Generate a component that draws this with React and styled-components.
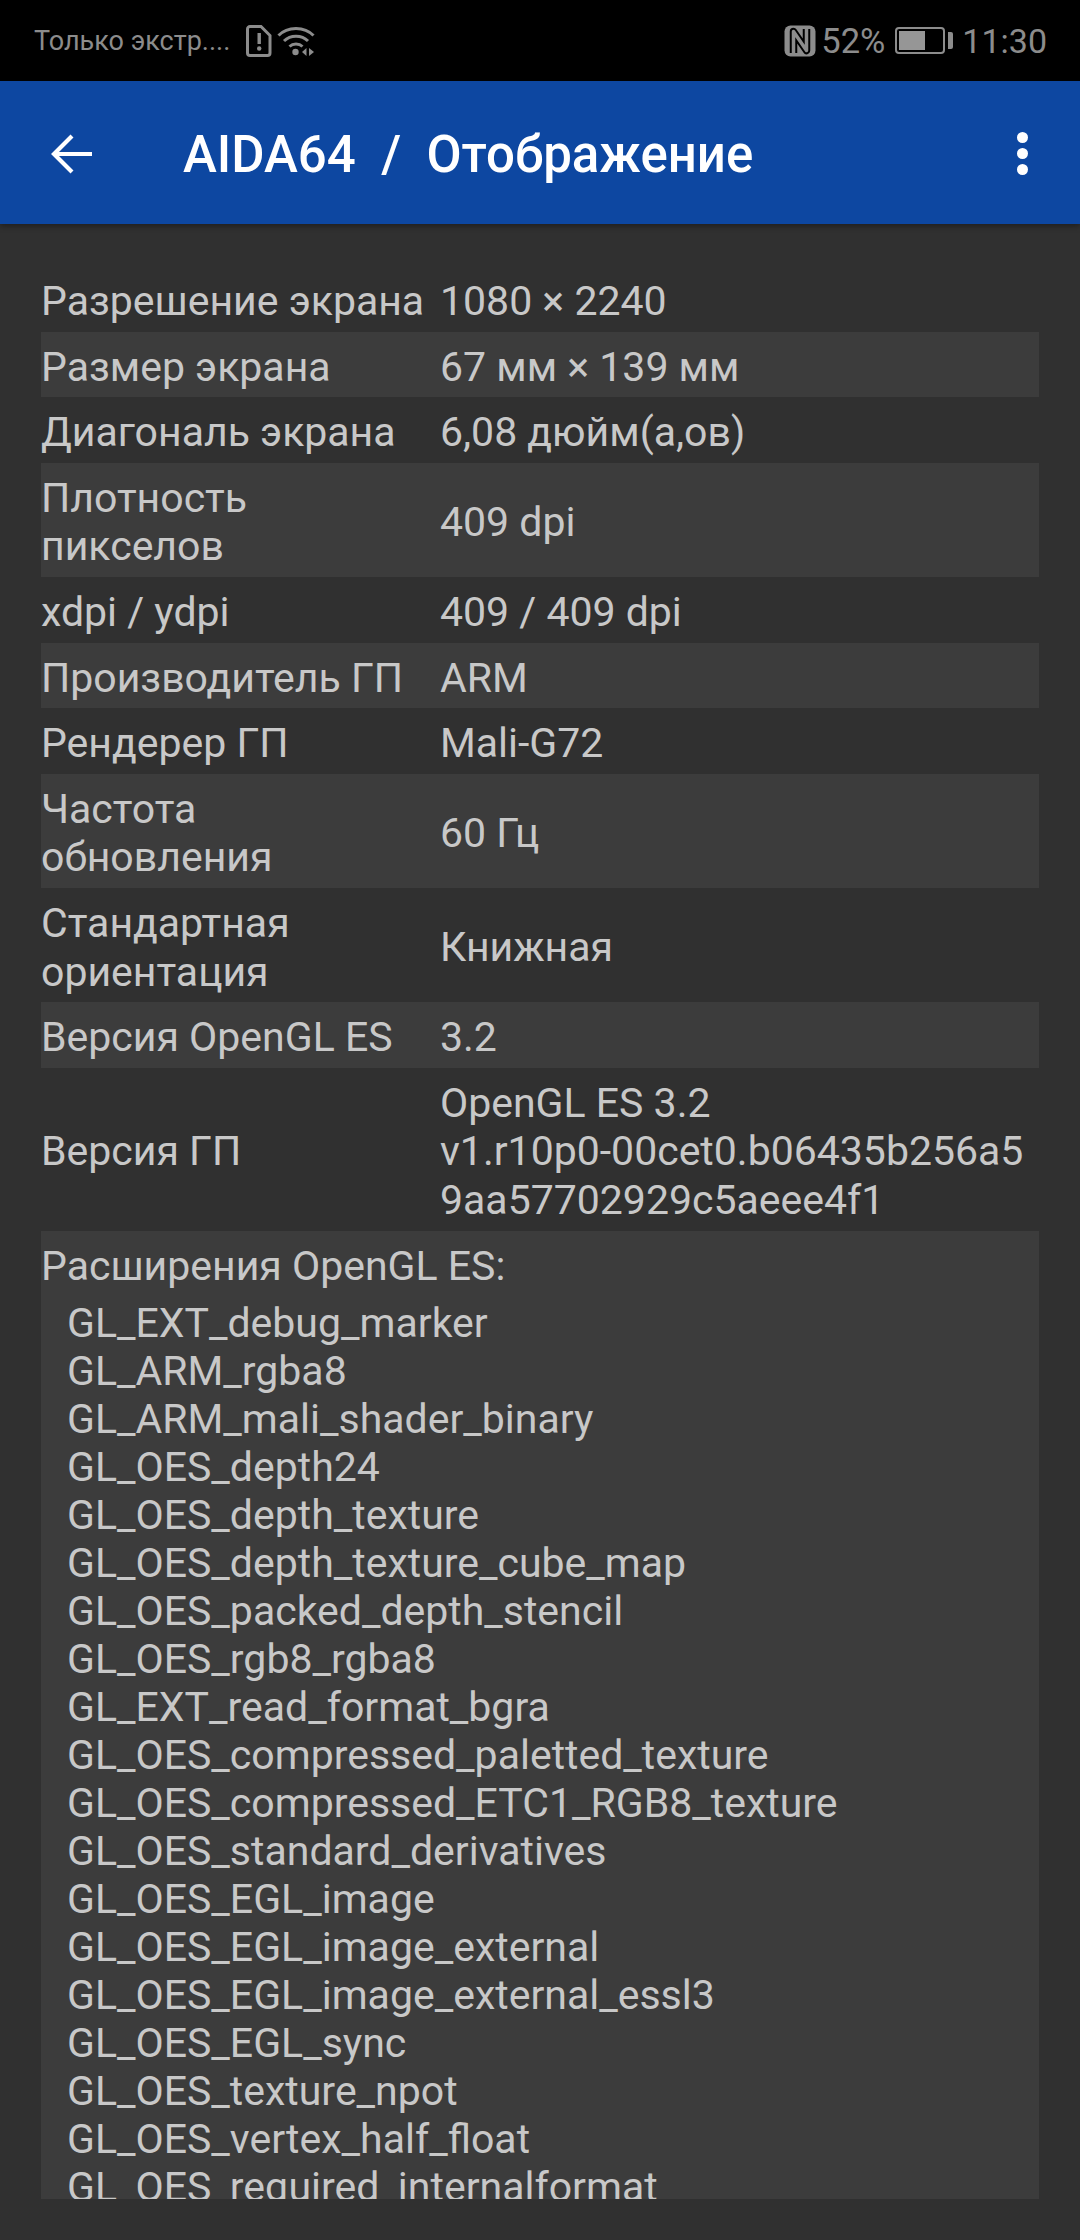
import React from 'react'
import styled, { createGlobalStyle } from 'styled-components'

const rows = [
  ['Разрешение экрана', '1080 × 2240'],
  ['Размер экрана', '67 мм × 139 мм'],
  ['Диагональ экрана', '6,08 дюйм(а,ов)'],
  ['Плотность\nпикселов', '409 dpi'],
  ['xdpi / ydpi', '409 / 409 dpi'],
  ['Производитель ГП', 'ARM'],
  ['Рендерер ГП', 'Mali-G72'],
  ['Частота\nобновления', '60 Гц'],
  ['Стандартная\nориентация', 'Книжная'],
  ['Версия OpenGL ES', '3.2'],
  ['Версия ГП', 'OpenGL ES 3.2\nv1.r10p0-00cet0.b06435b256a5\n9aa57702929c5aeee4f1'],
]

const extensions = [
  'GL_EXT_debug_marker',
  'GL_ARM_rgba8',
  'GL_ARM_mali_shader_binary',
  'GL_OES_depth24',
  'GL_OES_depth_texture',
  'GL_OES_depth_texture_cube_map',
  'GL_OES_packed_depth_stencil',
  'GL_OES_rgb8_rgba8',
  'GL_EXT_read_format_bgra',
  'GL_OES_compressed_paletted_texture',
  'GL_OES_compressed_ETC1_RGB8_texture',
  'GL_OES_standard_derivatives',
  'GL_OES_EGL_image',
  'GL_OES_EGL_image_external',
  'GL_OES_EGL_image_external_essl3',
  'GL_OES_EGL_sync',
  'GL_OES_texture_npot',
  'GL_OES_vertex_half_float',
  'GL_OES_required_internalformat',
]

const App = () => {
  return (
    <>
      <GlobalStyle />
      <Screen>
        <StatusBar>
          <StatusGroup>
            <Carrier>Только экстр....</Carrier>
            <svg width="26" height="32" viewBox="0 0 26 32">
              <path d="M4 1.500h11l9 9V28a2.500 2.500 0 0 1-2.500 2.500H4A2.500 2.500 0 0 1 1.500 28V4A2.500 2.500 0 0 1 4 1.500z" fill="none" stroke="#8c8c8c" strokeWidth="3" />
              <rect x="11.500" y="8" width="3.400" height="11" fill="#8c8c8c" />
              <circle cx="13.200" cy="23.500" r="2.200" fill="#8c8c8c" />
            </svg>
            <WifiIcon width="38" height="32" viewBox="0 0 38 32">
              <g fill="none" stroke="#8c8c8c" strokeWidth="3">
                <path d="M1.500 10.500C10.500 1 27.500 1 36.500 10.500" />
                <path d="M7 16c6.500-6.500 17.500-6.500 24 0" />
                <path d="M12.500 21.500c3.500-3.200 9.500-3.200 13 0" />
              </g>
              <circle cx="18.500" cy="27" r="3.200" fill="#8c8c8c" />
              <path d="M29.500 23v8l-4.500-4zM32 23v8l5-4z" fill="#8c8c8c" />
            </WifiIcon>
          </StatusGroup>
          <StatusGroup>
            <svg width="32" height="32" viewBox="0 0 32 32">
              <rect x="0.500" y="0.500" width="31" height="31" rx="6" fill="#8c8c8c" />
              <path d="M9.500 28V6.500L22.500 25.500V4" fill="none" stroke="#000" strokeWidth="7.500" strokeLinejoin="round" />
              <path d="M9.500 28V6.500L22.500 25.500V4" fill="none" stroke="#8c8c8c" strokeWidth="3.500" strokeLinejoin="round" />
            </svg>
            <BatteryPercent>52%</BatteryPercent>
            <BatteryIcon>
              <BatteryLevel />
            </BatteryIcon>
            <BatteryNub />
            <Clock>11:30</Clock>
          </StatusGroup>
        </StatusBar>

        <Toolbar>
          <IconSlot>
            <svg width="44" height="44" viewBox="0 0 44 44">
              <path d="M42 22H5M22 4L4 22l18 18" fill="none" stroke="#fff" strokeWidth="4.200" />
            </svg>
          </IconSlot>
          <Title>AIDA64&nbsp; /&nbsp; Отображение</Title>
          <MenuDots>
            <span />
            <span />
            <span />
          </MenuDots>
        </Toolbar>

        <Content>
          {rows.map(([label, value], i) => (
            <Row key={label} $striped={i % 2 === 1}>
              <Label>{label}</Label>
              <Value>{value}</Value>
            </Row>
          ))}
          <ExtBlock>
            <ExtHead>Расширения OpenGL ES:</ExtHead>
            {extensions.map((name) => (
              <ExtItem key={name}>{name}</ExtItem>
            ))}
          </ExtBlock>
        </Content>
      </Screen>
    </>
  )
}

export default App

const GlobalStyle = createGlobalStyle`
  html, body {
    margin: 0;
    padding: 0;
    background: #303030;
  }
`

const Screen = styled.div`
  width: 1080px;
  height: 2240px;
  display: flex;
  flex-direction: column;
  overflow: hidden;
  background: #303030;
  font-family: Roboto, "Noto Sans", sans-serif;
`

const StatusBar = styled.div`
  height: 81px;
  flex: none;
  background: #000;
  color: #8c8c8c;
  display: flex;
  align-items: center;
  justify-content: space-between;
  padding: 0 33px 0 34px;
`

const StatusGroup = styled.div`
  display: flex;
  align-items: center;
`

const Carrier = styled.span`
  font-size: 27px;
  margin-right: 16px;
`

const WifiIcon = styled.svg`
  margin-left: 5px;
`

const BatteryPercent = styled.span`
  font-size: 34.500px;
  margin: 0 10px 0 5px;
`

const BatteryIcon = styled.div`
  width: 50px;
  height: 27px;
  box-sizing: border-box;
  border: 2px solid #8c8c8c;
  border-radius: 4px;
  padding: 2px;
  display: flex;
`

const BatteryLevel = styled.div`
  width: 26px;
  background: #969696;
`

const BatteryNub = styled.div`
  width: 5px;
  height: 17px;
  margin-left: 3px;
  background: #8c8c8c;
  border-radius: 0 2px 2px 0;
`

const Clock = styled.span`
  font-size: 34px;
  margin-left: 9px;
`

const Toolbar = styled.div`
  height: 143px;
  box-sizing: border-box;
  flex: none;
  background: #0d47a1;
  color: #fff;
  display: flex;
  align-items: center;
  box-shadow: 0 2px 6px rgba(0, 0, 0, 0.4);
  padding: 2px 24px 0 50px;
`

const IconSlot = styled.div`
  width: 133px;
  display: flex;
`

const Title = styled.h1`
  flex: 1;
  margin: 2px 0 0;
  font-size: 51px;
  font-weight: 500;
  white-space: nowrap;
`

const MenuDots = styled.div`
  display: flex;
  flex-direction: column;
  gap: 5px;
  margin-right: 28px;

  span {
    width: 11px;
    height: 11px;
    border-radius: 50%;
    background: #fff;
  }
`

const Content = styled.div`
  flex: 1;
  min-height: 0;
  display: flex;
  flex-direction: column;
  padding: 42px 41px 41px 41px;
  color: #c8c8c8;
  font-size: 41px;
  line-height: 48.6px;
`

const Row = styled.div`
  flex: none;
  display: flex;
  align-items: center;
  padding: 11px 0 6px;
  background: ${(p) => (p.$striped ? '#3c3c3c' : 'transparent')};
`

const Label = styled.div`
  width: 399px;
  flex: none;
  white-space: pre-line;
`

const Value = styled.div`
  flex: 1;
  white-space: pre-line;
`

const ExtBlock = styled.div`
  flex: 1;
  min-height: 0;
  overflow: hidden;
  background: #3c3c3c;
  padding-top: 11px;
`

const ExtHead = styled.div`
  margin-bottom: 9px;
`

const ExtItem = styled.div`
  padding-left: 26px;
  line-height: 48px;
  white-space: nowrap;
`
